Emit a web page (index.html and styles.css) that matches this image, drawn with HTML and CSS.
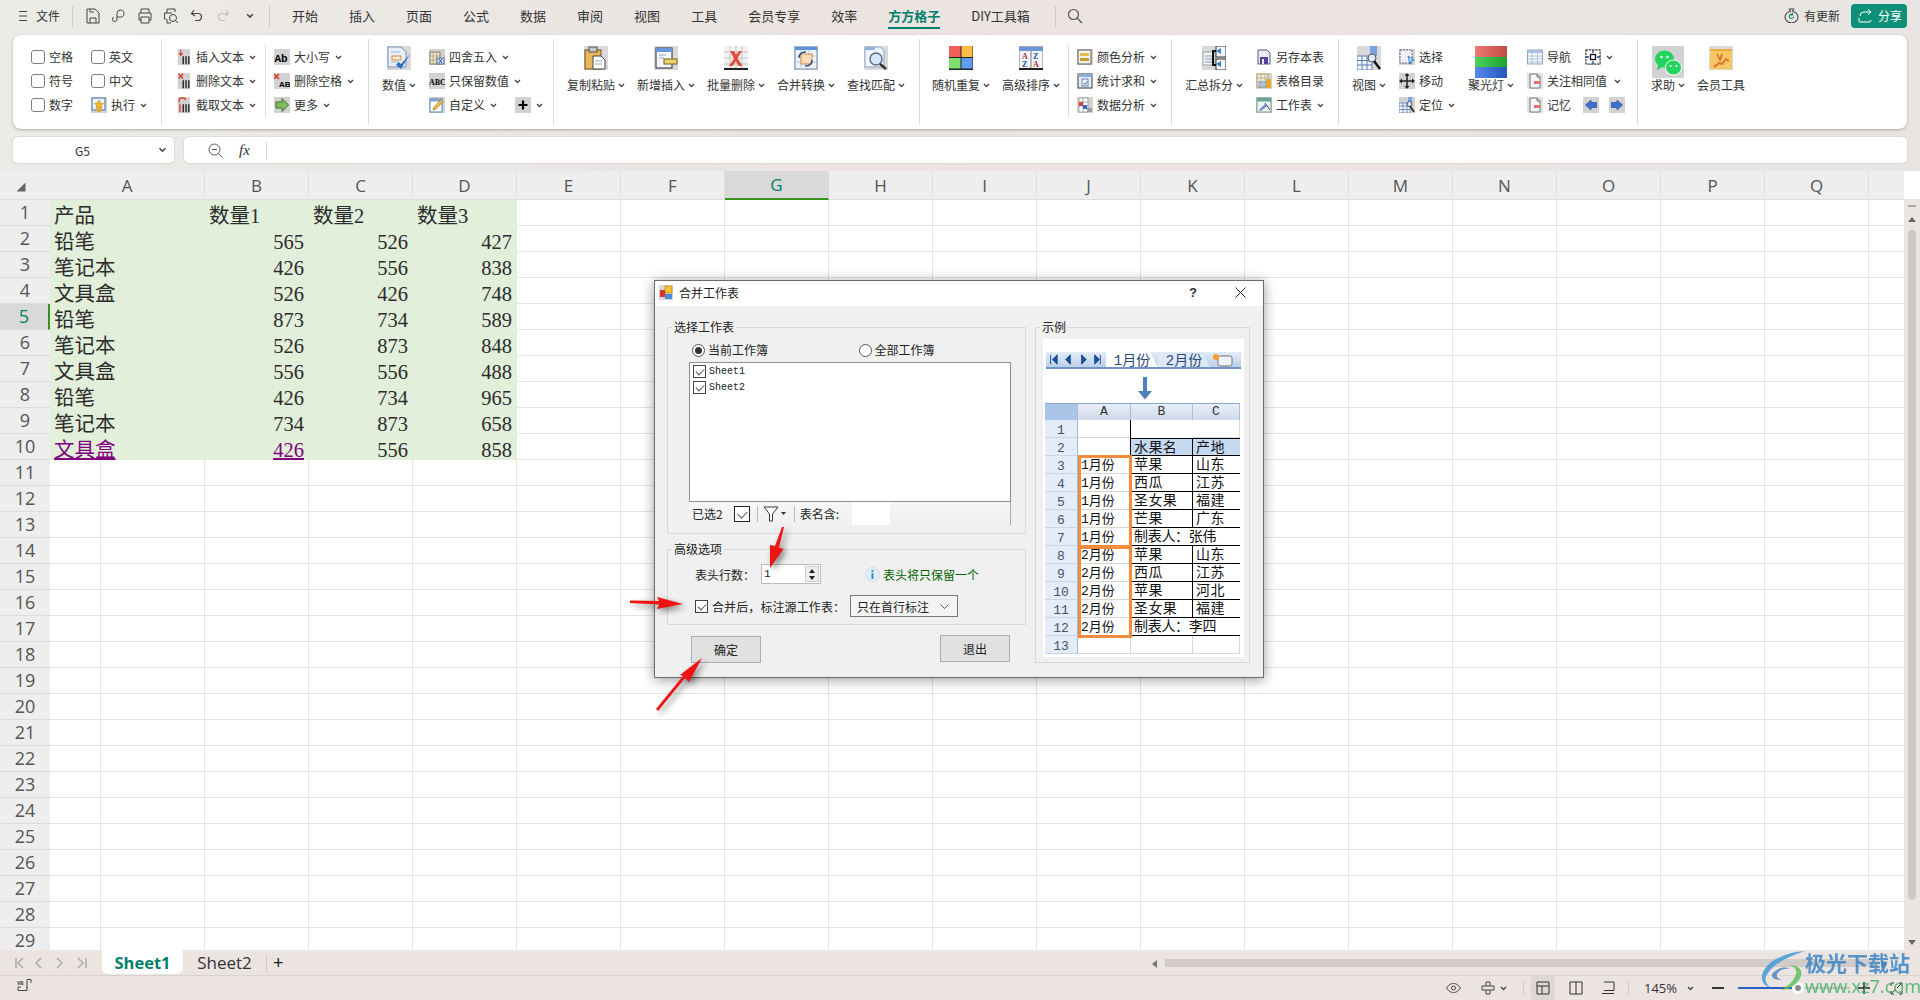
FILE: index.html
```html
<!DOCTYPE html>
<html lang="zh-CN">
<head>
<meta charset="utf-8">
<title>合并工作表</title>
<link rel="stylesheet" href="styles.css">
</head>
<body>
<svg class="defs" aria-hidden="true">
  <defs>
    <symbol id="chev" viewBox="0 0 7 5"><path d="M1 1l2.5 2.5L6 1" fill="none" stroke="#444" stroke-width="1.3"/></symbol>
    <symbol id="bars" viewBox="0 0 16 20"><rect width="16" height="20" fill="#d2d2d2"/><path d="M7 9v10M10.500 9v10M14 9v10" stroke="#111" stroke-width="1.6"/></symbol>
    <symbol id="s-run" viewBox="0 0 16 16"><rect width="16" height="16" fill="#d2d2d2"/><rect x="1" y="1" width="13" height="12" fill="#eef3fb" stroke="#4a6fa5"/><path d="M8 3l1.500 3 3 .4-2.200 2 .6 3L8 10l-2.900 1.400.6-3-2.200-2 3-.4z" fill="#f3b81f" stroke="#a87a10" stroke-width=".5"/><circle cx="8" cy="13" r="2.300" fill="#e6a91e"/></symbol>
    <symbol id="s-more" viewBox="0 0 16 16"><rect width="16" height="16" fill="#d2d2d2"/><path d="M2 5h6V1.500L14.500 8 8 14.500V11H2z" fill="#7fbd5a" stroke="#3d6e2b"/></symbol>
    <symbol id="s-round" viewBox="0 0 16 16"><rect width="16" height="16" fill="#d2d2d2"/><rect x="1" y="3" width="10" height="12" fill="#f5e6b8" stroke="#7b7b7b"/><path d="M4 3v12M7.500 3v12M1 7h10M1 11h10" stroke="#9a9a9a" stroke-width=".7"/><rect x="8" y="9" width="7" height="6" fill="#dfe8f6" stroke="#4a6fa5"/><path d="M10 10l3 4M13 10l-3 4" stroke="#27477d"/></symbol>
    <symbol id="s-custom" viewBox="0 0 16 16"><rect width="16" height="16" fill="#d2d2d2"/><rect x="1" y="2" width="12" height="13" fill="#fff" stroke="#5a7fb0"/><path d="M1 2h12v2.500H1z" fill="#7fa5d8"/><path d="M4 13l1-3 7-7.500 2 2L7 12z" fill="#f1c24b" stroke="#9a6f12" stroke-width=".7"/></symbol>
    <symbol id="s-plus" viewBox="0 0 16 16"><rect width="16" height="16" fill="#d2d2d2"/><path d="M8 3.500v9M3.500 8h9" stroke="#000" stroke-width="2.200"/></symbol>
    <symbol id="s-color" viewBox="0 0 16 16"><rect width="16" height="16" fill="#d2d2d2"/><rect x="1" y="1" width="13" height="14" fill="#f2f2ea" stroke="#5c5c5c"/><rect x="3" y="4" width="9" height="3" fill="#e3c04d"/><rect x="3" y="9" width="9" height="3" fill="#c79b2c"/></symbol>
    <symbol id="s-stat" viewBox="0 0 16 16"><rect x="1" y="1" width="14" height="14" fill="#eaf1fb" stroke="#333"/><rect x="1" y="1" width="14" height="3" fill="#8daedb"/><rect x="5" y="6" width="6" height="7" fill="#fff" stroke="#5b7fb5"/><path d="M6.500 10l1.500 1.500 2-3" fill="none" stroke="#2a5b9c"/></symbol>
    <symbol id="s-data" viewBox="0 0 16 16"><rect width="16" height="16" fill="#d2d2d2"/><path d="M2 1h9v14H2zM2 5h9M2 9h9M6 1v14" fill="#fff" stroke="#8a8a8a" stroke-width=".7"/><rect x="2" y="5" width="4" height="4" fill="#d9433d"/><rect x="6" y="8" width="4" height="4" fill="#3a62c6"/><rect x="10" y="11" width="5" height="4" fill="#9b9b9b"/></symbol>
    <symbol id="s-save" viewBox="0 0 16 16"><path d="M2 1h9l3 3v11H2z" fill="#e8ebf5" stroke="#5c5c7a"/><rect x="4" y="8" width="8" height="7" fill="#5b3f9c"/><rect x="6" y="10" width="2" height="5" fill="#e8ebf5"/></symbol>
    <symbol id="s-index" viewBox="0 0 16 16"><rect width="16" height="16" fill="#d2d2d2"/><rect x="1" y="1" width="11" height="13" fill="#f8e9c2" stroke="#b8893a" stroke-width=".7"/><path d="M1 5h11M1 9h11M5 1v13M9 1v13" stroke="#8da7cc" stroke-width=".7"/><rect x="10" y="6" width="5" height="9" fill="#e9a928"/><rect x="3" y="9" width="7" height="5" fill="#b5c3d8" stroke="#6d85a8" stroke-width=".6"/></symbol>
    <symbol id="s-sheet" viewBox="0 0 16 16"><rect width="16" height="16" fill="#d2d2d2"/><rect x="1" y="1" width="14" height="14" fill="#eef4f2" stroke="#5e8a85" stroke-width=".8"/><rect x="1" y="1" width="14" height="3.500" fill="#6aa39b"/><path d="M3 13l6-6 2 2-6 5z" fill="#6f8fd0"/><path d="M9 6l5 7" stroke="#444"/></symbol>
    <symbol id="s-select" viewBox="0 0 16 16"><rect width="16" height="16" fill="#d2d2d2"/><rect x="1" y="1" width="12" height="13" fill="#eef2f8" stroke="#666" stroke-dasharray="2 1"/><path d="M9 7l6 4-3 .6-1 3.400z" fill="#cfe6ff" stroke="#2f86d8"/></symbol>
    <symbol id="s-move" viewBox="0 0 16 16"><rect width="16" height="16" fill="#d2d2d2"/><path d="M8 1.500v13M1.500 8h13" stroke="#222" stroke-width="1.500"/><path d="M8 0l2.500 3h-5zM8 16l2.500-3h-5zM0 8l3-2.500v5zM16 8l-3-2.500v5z" fill="#222"/></symbol>
    <symbol id="s-loc" viewBox="0 0 16 16"><rect width="16" height="16" fill="#d2d2d2"/><path d="M0 6h11v10H0zM0 9h11M0 12.500h11M4 6v10M8 6v10" fill="#f2f6fc" stroke="#587db4" stroke-width=".8"/><rect x="9" y="0" width="4" height="7" fill="#7aa2e0"/><circle cx="10.500" cy="7" r="2.500" fill="#dfe9f7" stroke="#555"/><path d="M11 9l4 6" stroke="#222" stroke-width="1.500"/></symbol>
    <symbol id="s-nav" viewBox="0 0 16 16"><rect x=".5" y="1" width="15" height="14" fill="#f4f7fb" stroke="#8ea6c6"/><rect x=".5" y="1" width="15" height="3" fill="#a9bfdc"/><path d="M.5 7h15M.5 10h15M.5 13h15M5 4v11M10.500 4v11" stroke="#9fb4d0" stroke-width=".7"/></symbol>
    <symbol id="s-focus" viewBox="0 0 16 16"><rect width="16" height="16" fill="#d2d2d2"/><rect x="1" y="1" width="14" height="14" fill="#fff" stroke="#111" stroke-dasharray="2 1.200"/><rect x="5.500" y="5.500" width="5" height="5" fill="#fff" stroke="#111" stroke-width="1.300"/><path d="M8 1v3M8 12v3M1 8h3M12 8h3" stroke="#1c3f8f" stroke-width="1.300"/></symbol>
    <symbol id="s-mem" viewBox="0 0 16 16"><rect width="16" height="16" fill="#e2e2e2"/><path d="M3 1h7l3 3v11H3z" fill="#f6f6f6" stroke="#777"/><rect x="7" y="8" width="6" height="3" fill="#e4736c"/><path d="M10 1v3h3" fill="none" stroke="#777"/></symbol>
    <symbol id="s-left" viewBox="0 0 16 16"><rect width="16" height="16" fill="#d2d2d2"/><path d="M2.500 8L8 3v2.500h5.500v5H8V13z" fill="#3d6fd0" stroke="#1e3f8a" stroke-width=".6"/></symbol>
    <symbol id="s-right" viewBox="0 0 16 16"><rect width="16" height="16" fill="#d2d2d2"/><path d="M13.500 8L8 3v2.500H2.500v5H8V13z" fill="#3d6fd0" stroke="#1e3f8a" stroke-width=".6"/></symbol>

    <symbol id="l-num" viewBox="0 0 24 24"><rect width="24" height="24" fill="#d9d9d9"/><path d="M1 1h13l5 5v15H1z" fill="#e9f0fb" stroke="#7a8fb0"/><path d="M4 6h9M4 16h8" stroke="#9db4d6"/><rect x="5" y="10" width="9" height="4" fill="#f6f2e2" stroke="#d98a32"/><path d="M9 19l5 4 9-15-9 10-2.500-2z" fill="#2f6fc4"/></symbol>
    <symbol id="l-paste" viewBox="0 0 24 24"><rect width="24" height="24" fill="#d9d9d9"/><rect x="1" y="4" width="16" height="19" fill="#e9b75c" stroke="#6b4e1f"/><rect x="5" y="1" width="8" height="5" fill="#c7c7c7" stroke="#555"/><path d="M9 10h8l4 4v9H9z" fill="#fff" stroke="#444"/><path d="M11 15h7M11 18h7" stroke="#9ab"/></symbol>
    <symbol id="l-ins" viewBox="0 0 24 24"><rect width="24" height="24" fill="#d9d9d9"/><rect x="2" y="2" width="16" height="20" fill="#f4f7fc" stroke="#2a2a2a"/><rect x="2" y="2" width="16" height="4" fill="#6a95d8"/><path d="M5 9h7M5 12h5" stroke="#8da6cc"/><rect x="10" y="13" width="13" height="5" fill="#e9d36a" stroke="#75651c"/></symbol>
    <symbol id="l-del" viewBox="0 0 24 24"><rect width="24" height="24" fill="#f3f3f3"/><path d="M0 6h24M0 12h24M0 18h24M6 0v24M12 0v24M18 0v24" stroke="#c4c4c4"/><rect y="22" width="24" height="2" fill="#222"/><path d="M6 5l4 0 2 4 3-4h3l-4.500 7 5 8h-4l-2.500-5-3.500 5H5l5-7.500z" fill="#e64a3a"/></symbol>
    <symbol id="l-merge" viewBox="0 0 24 24"><rect width="24" height="24" fill="#d9d9d9"/><rect x="1" y="1" width="22" height="22" fill="#eef3fb" stroke="#6e89b4"/><rect x="1" y="1" width="22" height="3" fill="#5f8fd6"/><path d="M1 10h22M1 16h22M7 4v19M15 4v19" stroke="#bccbe3"/><rect x="7" y="8" width="11" height="10" fill="#f8dcc0" stroke="#d98a32"/><path d="M5 12c0-4 3-6 7-6M18 14c0 4-3 6-7 6" fill="none" stroke="#23488a" stroke-width="1.400"/></symbol>
    <symbol id="l-find" viewBox="0 0 24 24"><rect width="24" height="24" fill="#d9d9d9"/><path d="M1 1h15l4 4v16H1z" fill="#f0f4fb" stroke="#8fa5c7"/><rect x="1" y="1" width="10" height="3" fill="#8fb0e0"/><circle cx="12" cy="13" r="6" fill="#d6e6fa" stroke="#5f6f85" stroke-width="1.500"/><path d="M16 18l6 5" stroke="#333" stroke-width="2.500"/></symbol>
    <symbol id="l-rand" viewBox="0 0 24 24"><rect width="24" height="24" fill="#222"/><rect x="0" y="0" width="11.500" height="11" fill="#f25f58"/><rect x="12.500" y="0" width="11" height="11" fill="#ffbe42"/><rect x="0" y="12" width="11.500" height="10.500" fill="#7ee06a"/><rect x="12.500" y="12" width="11" height="10.500" fill="#5f9cf4"/></symbol>
    <symbol id="l-sort" viewBox="0 0 24 24"><rect width="24" height="24" fill="#d9d9d9"/><rect y="1" width="24" height="22" fill="#f1f5fb" stroke="#7a7a7a"/><rect y="1" width="24" height="4" fill="#6a95d8"/><path d="M12 5v18" stroke="#777"/><path d="M0 23h24" stroke="#222" stroke-width="2"/><text x="3" y="13" class="svg-t red">A</text><text x="3" y="21" class="svg-t blue">Z</text><text x="14" y="13" class="svg-t blue">Z</text><text x="14" y="21" class="svg-t red">A</text></symbol>
    <symbol id="l-sum" viewBox="0 0 24 24"><rect width="24" height="24" fill="#d9d9d9"/><rect x="1" y="6" width="12" height="13" fill="#eef1f6" stroke="#9aa"/><path d="M3 10h8M3 13h8M3 16h8" stroke="#99a"/><rect x="14" y="0" width="10" height="11" fill="#f3f6fb" stroke="#333"/><rect x="14" y="13" width="10" height="11" fill="#f3f6fb" stroke="#333"/><path d="M14 5h-3v14h3" fill="none" stroke="#111" stroke-width="2"/><path d="M14 5l5-3v6zM14 18l5-3v6z" fill="#3f7fd0"/></symbol>
    <symbol id="l-view" viewBox="0 0 24 24"><rect width="24" height="24" fill="#d9d9d9"/><path d="M0 10h15v14H0zM0 14.500h15M0 19h15M5 10v14M10 10v14" fill="#f2f6fc" stroke="#587db4"/><rect x="13" y="0" width="7" height="10" fill="#7aa2e0"/><circle cx="15" cy="12" r="4" fill="#dfe9f7" stroke="#555"/><path d="M17 15l6 8" stroke="#111" stroke-width="2.500"/></symbol>
    <symbol id="l-spot" viewBox="0 0 32 32"><rect width="32" height="11" fill="#ef5a55"/><rect y="11" width="32" height="10" fill="#22c63a"/><rect y="21" width="32" height="11" fill="#2b6be8"/><rect width="32" height="32" fill="url(#spot-sheen)"/></symbol>
    <linearGradient id="spot-sheen" x1="0" y1="0" x2="1" y2="0"><stop offset="0" stop-color="#fff" stop-opacity=".2"/><stop offset="1" stop-color="#000" stop-opacity=".18"/></linearGradient>
    <symbol id="l-wx" viewBox="0 0 32 32"><rect width="32" height="32" fill="#d2d2d2"/><ellipse cx="12.500" cy="13" rx="9.500" ry="8.500" fill="#22d45d"/><path d="M6 19l-1 5 6-3z" fill="#22d45d"/><ellipse cx="21.500" cy="21.500" rx="8" ry="7.500" fill="#22d45d" stroke="#fff"/><circle cx="9.500" cy="11" r="1.300" fill="#fff"/><circle cx="15.500" cy="11" r="1.300" fill="#fff"/><circle cx="18.500" cy="20" r="1.100" fill="#fff"/><circle cx="24.500" cy="20" r="1.100" fill="#fff"/></symbol>
    <symbol id="l-vip" viewBox="0 0 24 24"><rect width="24" height="24" fill="#d9d9d9"/><rect x="1" y="3" width="22" height="20" fill="#f7c766"/><rect x="1" y="3" width="22" height="2" fill="#ecab3e"/><path d="M8 8l3 6 2-6" fill="none" stroke="#d8641d" stroke-width="1.500"/><path d="M5 21l5-4 3 1 4-5 3 2" fill="none" stroke="#e0742a" stroke-width="2"/></symbol>
  </defs>
</svg>

<div class="app">
  <header class="topbar">
    <svg class="menu-ic" viewBox="0 0 8 12"><path d="M0 1.500h8M0 6h8M0 10.500h8" stroke="#444" stroke-width="1.200"/></svg>
    <span class="file">文件</span>
    <i class="tsep first"></i>
    <svg class="qi" viewBox="0 0 14 16"><path d="M1 1h8l4 4v10H1zM4 15v-5h6v5M4 1v3h4" fill="none" stroke="#444"/></svg>
    <svg class="qi" viewBox="0 0 14 16"><path d="M5 9h3a3.500 3.500 0 1 0-3-3.500V11a2.300 2.300 0 1 1-3-2" fill="none" stroke="#444"/></svg>
    <svg class="qi" viewBox="0 0 14 16"><path d="M3 5V1h8v4M3 12H1V5h12v7h-2M3 9h8v6H3z" fill="none" stroke="#444"/></svg>
    <svg class="qi" viewBox="0 0 14 16"><path d="M3 5V1h8v3M2 11H.5V5H8M3 11v4h4" fill="none" stroke="#444"/><circle cx="9" cy="10" r="3.500" fill="none" stroke="#444"/><path d="M11.500 12.500l2.500 2.500" stroke="#444"/></svg>
    <svg class="qi" viewBox="0 0 14 16"><path d="M4 2L1.500 5.500 5 8M2 5.500h6a3.500 3.500 0 0 1 0 7H5" fill="none" stroke="#444" stroke-width="1.200"/></svg>
    <svg class="qi" viewBox="0 0 14 16"><path d="M10 2l2.500 3.500L9 8M12 5.500H6a3.500 3.500 0 0 0 0 7h3" fill="none" stroke="#bdbdbd" stroke-width="1.200"/></svg>
    <svg class="qchev"><use href="#chev"/></svg>
    <i class="tsep second"></i>
    <nav class="tabs">
      <span class="tab">开始</span><span class="tab">插入</span><span class="tab">页面</span><span class="tab">公式</span><span class="tab">数据</span><span class="tab">审阅</span><span class="tab">视图</span><span class="tab">工具</span><span class="tab">会员专享</span><span class="tab">效率</span><span class="tab active">方方格子</span><span class="tab">DIY工具箱</span>
    </nav>
    <i class="tsep third"></i>
    <svg class="search" viewBox="0 0 16 16"><circle cx="6.500" cy="6.500" r="5" fill="none" stroke="#555" stroke-width="1.200"/><path d="M10 10l5 5" stroke="#555" stroke-width="1.200"/></svg>
    <div class="top-right">
      <svg class="upd" viewBox="0 0 14 14"><path d="M5 1h4l-1 2a6 5.500 0 1 1-2 0z" fill="none" stroke="#444"/><path d="M9 8a2 2 0 1 1-1-2M8 4.500V6.500H6" fill="none" stroke="#0e8c74"/></svg>
      <span class="upd-t">有更新</span>
      <span class="share"><svg viewBox="0 0 14 14"><path d="M13 3H6a4 4 0 0 0-4 4v0M1 9v3a1 1 0 0 0 1 1h9a2 2 0 0 0 2-2" fill="none" stroke="#fff"/><path d="M10 .5L13 3l-3 2.500" fill="none" stroke="#fff"/></svg>分享</span>
    </div>
  </header>

  <section class="ribbon">
    <div class="grp g-a">
      <div class="scol w60">
        <label class="sm"><b class="cb"></b>空格</label>
        <label class="sm"><b class="cb"></b>符号</label>
        <label class="sm"><b class="cb"></b>数字</label>
      </div>
      <div class="scol">
        <label class="sm"><b class="cb"></b>英文</label>
        <label class="sm"><b class="cb"></b>中文</label>
        <span class="sm"><svg class="si"><use href="#s-run"/></svg>执行<svg class="chev"><use href="#chev"/></svg></span>
      </div>
    </div>
    <i class="sep"></i>
    <div class="grp g-b">
      <div class="scol">
        <span class="sm"><svg class="si" viewBox="0 0 16 20"><use href="#bars"/><path d="M4 1v7M1.500 5L4 8l2.500-3" fill="none" stroke="#e52b1f" stroke-width="1.300"/></svg>插入文本<svg class="chev"><use href="#chev"/></svg></span>
        <span class="sm"><svg class="si" viewBox="0 0 16 20"><use href="#bars"/><path d="M1 1l6 6M7 1L1 7" stroke="#e52b1f" stroke-width="1.600"/></svg>删除文本<svg class="chev"><use href="#chev"/></svg></span>
        <span class="sm"><svg class="si" viewBox="0 0 16 20"><use href="#bars"/><path d="M2 7V4a4 3 0 0 1 8 0" fill="none" stroke="#e52b1f" stroke-width="1.500"/><path d="M3 9v10" stroke="#e52b1f" stroke-width="1.600"/></svg>截取文本<svg class="chev"><use href="#chev"/></svg></span>
      </div>
    </div>
    <i class="sep short"></i>
    <div class="grp g-c">
      <div class="scol">
        <span class="sm"><svg class="si gray" viewBox="0 0 16 16"><text x=".5" y="12.500" class="svg-ab">Ab</text></svg>大小写<svg class="chev"><use href="#chev"/></svg></span>
        <span class="sm"><svg class="si gray" viewBox="0 0 16 16"><path d="M0 1l5 5M5 1L0 6" stroke="#e52b1f" stroke-width="1.500"/><text x="5" y="14" class="svg-abs">AB</text></svg>删除空格<svg class="chev"><use href="#chev"/></svg></span>
        <span class="sm"><svg class="si"><use href="#s-more"/></svg>更多<svg class="chev"><use href="#chev"/></svg></span>
      </div>
    </div>
    <i class="sep"></i>
    <div class="grp g-d">
      <div class="lg"><svg class="li"><use href="#l-num"/></svg><span class="ll">数值<svg class="chev"><use href="#chev"/></svg></span></div>
      <div class="scol">
        <span class="sm"><svg class="si"><use href="#s-round"/></svg>四舍五入<svg class="chev"><use href="#chev"/></svg></span>
        <span class="sm"><svg class="si gray" viewBox="0 0 16 16"><text x="0" y="12" class="svg-abc">ABC</text></svg>只保留数值<svg class="chev"><use href="#chev"/></svg></span>
        <span class="sm"><svg class="si"><use href="#s-custom"/></svg>自定义<svg class="chev"><use href="#chev"/></svg><svg class="si plus"><use href="#s-plus"/></svg><svg class="chev"><use href="#chev"/></svg></span>
      </div>
    </div>
    <i class="sep"></i>
    <div class="grp g-e">
      <div class="lg"><svg class="li"><use href="#l-paste"/></svg><span class="ll">复制粘贴<svg class="chev"><use href="#chev"/></svg></span></div>
      <div class="lg"><svg class="li"><use href="#l-ins"/></svg><span class="ll">新增插入<svg class="chev"><use href="#chev"/></svg></span></div>
      <div class="lg"><svg class="li"><use href="#l-del"/></svg><span class="ll">批量删除<svg class="chev"><use href="#chev"/></svg></span></div>
      <div class="lg"><svg class="li"><use href="#l-merge"/></svg><span class="ll">合并转换<svg class="chev"><use href="#chev"/></svg></span></div>
      <div class="lg"><svg class="li"><use href="#l-find"/></svg><span class="ll">查找匹配<svg class="chev"><use href="#chev"/></svg></span></div>
    </div>
    <i class="sep"></i>
    <div class="grp g-f">
      <div class="lg"><svg class="li"><use href="#l-rand"/></svg><span class="ll">随机重复<svg class="chev"><use href="#chev"/></svg></span></div>
      <div class="lg"><svg class="li"><use href="#l-sort"/></svg><span class="ll">高级排序<svg class="chev"><use href="#chev"/></svg></span></div>
    </div>
    <i class="sep short"></i>
    <div class="grp g-g">
      <div class="scol">
        <span class="sm"><svg class="si"><use href="#s-color"/></svg>颜色分析<svg class="chev"><use href="#chev"/></svg></span>
        <span class="sm"><svg class="si"><use href="#s-stat"/></svg>统计求和<svg class="chev"><use href="#chev"/></svg></span>
        <span class="sm"><svg class="si"><use href="#s-data"/></svg>数据分析<svg class="chev"><use href="#chev"/></svg></span>
      </div>
    </div>
    <i class="sep"></i>
    <div class="grp g-h">
      <div class="lg"><svg class="li"><use href="#l-sum"/></svg><span class="ll">汇总拆分<svg class="chev"><use href="#chev"/></svg></span></div>
      <div class="scol">
        <span class="sm"><svg class="si"><use href="#s-save"/></svg>另存本表</span>
        <span class="sm"><svg class="si"><use href="#s-index"/></svg>表格目录</span>
        <span class="sm"><svg class="si"><use href="#s-sheet"/></svg>工作表<svg class="chev"><use href="#chev"/></svg></span>
      </div>
    </div>
    <i class="sep"></i>
    <div class="grp g-i">
      <div class="lg"><svg class="li"><use href="#l-view"/></svg><span class="ll">视图<svg class="chev"><use href="#chev"/></svg></span></div>
      <div class="scol w69">
        <span class="sm"><svg class="si"><use href="#s-select"/></svg>选择</span>
        <span class="sm"><svg class="si"><use href="#s-move"/></svg>移动</span>
        <span class="sm"><svg class="si"><use href="#s-loc"/></svg>定位<svg class="chev"><use href="#chev"/></svg></span>
      </div>
      <div class="lg spot"><svg class="li tall wide"><use href="#l-spot"/></svg><span class="ll over">聚光灯<svg class="chev"><use href="#chev"/></svg></span></div>
      <div class="scol">
        <span class="sm"><svg class="si"><use href="#s-nav"/></svg>导航<svg class="si nav2"><use href="#s-focus"/></svg><svg class="chev"><use href="#chev"/></svg></span>
        <span class="sm"><svg class="si"><use href="#s-mem"/></svg>关注相同值<svg class="chev wide-gap"><use href="#chev"/></svg></span>
        <span class="sm"><svg class="si"><use href="#s-mem"/></svg>记忆<svg class="si mem2"><use href="#s-left"/></svg><svg class="si mem3"><use href="#s-right"/></svg></span>
      </div>
    </div>
    <i class="sep"></i>
    <div class="grp g-j">
      <div class="lg"><svg class="li tall"><use href="#l-wx"/></svg><span class="ll over">求助<svg class="chev"><use href="#chev"/></svg></span></div>
      <div class="lg"><svg class="li"><use href="#l-vip"/></svg><span class="ll">会员工具</span></div>
    </div>
  </section>

  <section class="formula">
    <div class="namebox"><span>G5</span><svg class="nchev"><use href="#chev"/></svg></div>
    <div class="fxbox">
      <svg class="fz" viewBox="0 0 15 15"><circle cx="6.500" cy="6.500" r="5.500" fill="none" stroke="#555"/><path d="M4 6.500h5M10.500 10.500l4 4" stroke="#555"/></svg>
      <span class="fx">fx</span>
      <i class="fxsep"></i>
    </div>
  </section>

  <main class="sheet-wrap">
    <div class="sheet">
      <div class="corner"><i></i></div>
      <div class="ch">A</div><div class="ch">B</div><div class="ch">C</div><div class="ch">D</div><div class="ch">E</div><div class="ch">F</div><div class="ch sel">G</div><div class="ch">H</div><div class="ch">I</div><div class="ch">J</div><div class="ch">K</div><div class="ch">L</div><div class="ch">M</div><div class="ch">N</div><div class="ch">O</div><div class="ch">P</div><div class="ch">Q</div><div class="ch rest"></div>

      <div class="rh">1</div><div class="c">产品</div><div class="c">数量1</div><div class="c">数量2</div><div class="c">数量3</div>
      <div class="rh">2</div><div class="c">铅笔</div><div class="c n">565</div><div class="c n">526</div><div class="c n">427</div>
      <div class="rh">3</div><div class="c">笔记本</div><div class="c n">426</div><div class="c n">556</div><div class="c n">838</div>
      <div class="rh">4</div><div class="c">文具盒</div><div class="c n">526</div><div class="c n">426</div><div class="c n">748</div>
      <div class="rh sel">5</div><div class="c">铅笔</div><div class="c n">873</div><div class="c n">734</div><div class="c n">589</div>
      <div class="rh">6</div><div class="c">笔记本</div><div class="c n">526</div><div class="c n">873</div><div class="c n">848</div>
      <div class="rh">7</div><div class="c">文具盒</div><div class="c n">556</div><div class="c n">556</div><div class="c n">488</div>
      <div class="rh">8</div><div class="c">铅笔</div><div class="c n">426</div><div class="c n">734</div><div class="c n">965</div>
      <div class="rh">9</div><div class="c">笔记本</div><div class="c n">734</div><div class="c n">873</div><div class="c n">658</div>
      <div class="rh">10</div><div class="c"><u>文具盒</u></div><div class="c n"><u>426</u></div><div class="c n">556</div><div class="c n">858</div>
      <div class="rh">11</div><div class="rh">12</div><div class="rh">13</div><div class="rh">14</div><div class="rh">15</div><div class="rh">16</div><div class="rh">17</div><div class="rh">18</div><div class="rh">19</div><div class="rh">20</div><div class="rh">21</div><div class="rh">22</div><div class="rh">23</div><div class="rh">24</div><div class="rh">25</div><div class="rh">26</div><div class="rh">27</div><div class="rh">28</div><div class="rh">29</div>
    </div>
    <aside class="vbar">
      <i class="vdash"></i>
      <i class="vup"></i>
      <i class="vthumb"></i>
      <i class="vdown"></i>
    </aside>
  </main>

  <footer class="tabbar">
    <svg class="tnav" viewBox="0 0 80 12"><path d="M4 1v10M11 1L6 6l5 5M29 1l-5 5 5 5M45 1l5 5-5 5M66 1l5 5-5 5M74 1v10" fill="none" stroke="#aaa" stroke-width="1.500"/></svg>
    <span class="stab active">Sheet1</span>
    <span class="stab">Sheet2</span>
    <i class="tabsep"></i>
    <span class="addtab">+</span>
    <i class="harrow-l"></i>
    <i class="hthumb"></i>
    <i class="harrow-r"></i>
  </footer>
  <footer class="status">
    <svg class="vb" viewBox="0 0 15 12"><path d="M4 8H1v3.500h9V8M10 9V.5h4V4" fill="none" stroke="#444"/><text x="0" y="6" class="svg-vb">VB</text></svg>
    <div class="st-right">
      <svg class="s-eye" viewBox="0 0 15 10"><path d="M.5 5C3 1.500 5 .5 7.500 .5S12 1.500 14.500 5C12 8.500 10 9.500 7.500 9.500S3 8.500 .5 5z" fill="none" stroke="#444"/><circle cx="7.500" cy="5" r="2" fill="none" stroke="#444"/></svg>
      <svg class="s-cross" viewBox="0 0 14 14"><path d="M5 1h4v4H5zM5 9h4v4H5zM5 5H1v4h4M9 5h4v4H9" fill="none" stroke="#444"/></svg>
      <svg class="chev s-chev"><use href="#chev"/></svg>
      <i class="s-sep"></i>
      <span class="s-btn"><svg viewBox="0 0 14 14"><path d="M1 1h12v12H1zM1 5h12M6 5v8" fill="none" stroke="#333"/></svg></span>
      <svg class="s-i2" viewBox="0 0 14 14"><path d="M1 1h12v12H1zM7 1v12" fill="none" stroke="#333"/></svg>
      <svg class="s-i3" viewBox="0 0 14 14"><path d="M3 1h10v8.500H3M1 12.500h12" fill="none" stroke="#333"/></svg>
      <i class="s-sep s2"></i>
      <span class="pct">145%</span>
      <svg class="chev p-chev"><use href="#chev"/></svg>
      <i class="minus"></i>
      <div class="slider"><i class="fill"></i><i class="knob"></i></div>
      <svg class="s-plus" viewBox="0 0 12 12"><path d="M6 0v12M0 6h12" stroke="#222" stroke-width="1.500"/></svg>
      <svg class="s-full" viewBox="0 0 13 13"><path d="M1 4V1h3M9 1h3v3M12 9v3H9M4 12H1V9M2 11l4-4M7 6l4-4" fill="none" stroke="#333"/></svg>
    </div>
  </footer>
</div>

<section class="dialog">
  <div class="dtitle">
    <svg class="dicon" viewBox="0 0 14 15"><rect width="14" height="15" fill="#d8d8d8"/><rect x="6" y="1" width="7" height="7" fill="#f6c32e" stroke="#a07a10" stroke-width=".6"/><rect x="1" y="5" width="5" height="7" fill="#d8352c"/><rect x="6" y="9" width="7" height="5" fill="#4f8ad8"/></svg>
    <span class="dt-text">合并工作表</span>
    <span class="dq">?</span>
    <svg class="dx" viewBox="0 0 11 11"><path d="M.5 .5l10 10M10.500 .5l-10 10" stroke="#222" stroke-width="1"/></svg>
  </div>
  <div class="dbody">
    <div class="dleft">
      <fieldset class="fs fs-sel">
        <legend>选择工作表</legend>
        <div class="radios">
          <span class="radio on"><i></i>当前工作簿</span>
          <span class="radio"><i></i>全部工作簿</span>
        </div>
        <div class="listbox">
          <div class="li-row"><b class="ck"></b>Sheet1</div>
          <div class="li-row"><b class="ck"></b>Sheet2</div>
        </div>
        <div class="listbar">
          <span class="lb-count">已选2</span>
          <b class="ck big"></b>
          <i class="lb-sep"></i>
          <svg class="funnel" viewBox="0 0 24 16"><path d="M1 1h14L9.500 8v7H6.500V8z" fill="#fff" stroke="#333"/><path d="M18 6h5l-2.500 3z" fill="#333"/></svg>
          <i class="lb-sep"></i>
          <span class="lb-name">表名含:</span>
          <i class="lb-input"></i>
        </div>
      </fieldset>
      <fieldset class="fs fs-adv">
        <legend>高级选项</legend>
        <div class="adv-1">
          <span>表头行数：</span>
          <div class="spin"><span>1</span><div class="spinbtn"><i class="up"></i><i class="down"></i></div></div>
          <svg class="info" viewBox="0 0 15 15"><circle cx="7.500" cy="7.500" r="7" fill="#e4edf7" stroke="#cfdbe8"/><rect x="6.500" y="6" width="2" height="6" fill="#2d8fd5"/><rect x="6.500" y="3" width="2" height="2" fill="#2d8fd5"/></svg>
          <span class="hint">表头将只保留一个</span>
        </div>
        <div class="adv-2">
          <b class="ck"></b>
          <span class="adv-l">合并后，标注源工作表：</span>
          <div class="select"><span>只在首行标注</span><svg class="sel-chev" viewBox="0 0 9 5"><path d="M.5 .5L4.500 4.500 8.500 .5" fill="none" stroke="#555"/></svg></div>
        </div>
      </fieldset>
      <div class="dbtns">
        <span class="btn">确定</span>
        <span class="btn up1">退出</span>
      </div>
    </div>
    <fieldset class="fs fs-ex">
      <legend>示例</legend>
      <div class="exbox">
        <div class="xltabs">
          <span class="xlnav"><svg viewBox="0 0 58 16"><path d="M3 3v10M10 3L5 8l5 5zM24 3l-5 5 5 5zM36 3l5 5-5 5zM50 3l5 5-5 5zM56 3v10" fill="#1d4f9a" stroke="#1d4f9a"/></svg></span>
          <span class="xltab on">1月份</span>
          <span class="xltab">2月份</span>
          <svg class="xlnew" viewBox="0 0 24 14"><rect x="7" y="3" width="14" height="10" rx="2" fill="#eef3f8" stroke="#777"/><circle cx="5" cy="4" r="3" fill="#f2a12e"/></svg>
        </div>
        <svg class="exarrow" viewBox="0 0 16 24"><path d="M6 1h4v14h5l-7 8.500L1 15h5z" fill="#4f81bd"/></svg>
        <div class="xl">
          <div class="xh xc0"></div><div class="xh">A</div><div class="xh">B</div><div class="xh">C</div>
          <div class="xr">1</div><div class="xa"></div><div class="xb nob"></div><div class="xa"></div>
          <div class="xr">2</div><div class="xa"></div><div class="xb head">水果名</div><div class="xb head last">产地</div>
          <div class="xr">3</div><div class="xa">1月份</div><div class="xb">苹果</div><div class="xb last">山东</div>
          <div class="xr">4</div><div class="xa">1月份</div><div class="xb">西瓜</div><div class="xb last">江苏</div>
          <div class="xr">5</div><div class="xa">1月份</div><div class="xb">圣女果</div><div class="xb last">福建</div>
          <div class="xr">6</div><div class="xa">1月份</div><div class="xb">芒果</div><div class="xb last">广东</div>
          <div class="xr">7</div><div class="xa">1月份</div><div class="xb span2">制表人：张伟</div>
          <div class="xr">8</div><div class="xa">2月份</div><div class="xb">苹果</div><div class="xb last">山东</div>
          <div class="xr">9</div><div class="xa">2月份</div><div class="xb">西瓜</div><div class="xb last">江苏</div>
          <div class="xr">10</div><div class="xa">2月份</div><div class="xb">苹果</div><div class="xb last">河北</div>
          <div class="xr">11</div><div class="xa">2月份</div><div class="xb">圣女果</div><div class="xb last">福建</div>
          <div class="xr">12</div><div class="xa">2月份</div><div class="xb span2">制表人：李四</div>
          <div class="xr">13</div><div class="xa"></div><div class="xa"></div><div class="xa"></div>
          <i class="box b1"></i><i class="box b2"></i>
        </div>
      </div>
    </fieldset>
  </div>
</section>

<svg class="annot" viewBox="0 0 1920 1000" aria-hidden="true">
  <polygon points="770,568 783.500,549 779,547.500 784,527 782,527 775,546 770,545" fill="#f01313"/>
  <polygon points="683,604 657,609 659,604.500 630,603 630,600.500 659,601 657,597" fill="#f01313"/>
  <polygon points="702,658 689,682 685,678 658,711 656,709 683,676 680,675" fill="#f01313"/>
</svg>

<div class="watermark">
  <svg class="wm-logo" viewBox="0 0 46 42"><path d="M45 1C30 2 10 8 3 22c-3 7 0 14 8 16-6-4-7-10-3-15C14 13 30 6 45 1z" fill="#3f9bd8" opacity=".85"/><path d="M12 24c4-6 14-8 17-5-5-1-10 1-12 5-1 3 1 5 5 5-5 2-11 0-10-5z" fill="#4a86c5" opacity=".85"/><path d="M21 40c14-1 22-12 20-19-1-4-6-6-11-5 5 1 7 4 6 8-2 7-8 12-15 16z" fill="#5fbf5a" opacity=".85"/></svg>
  <div class="wm-text">
    <span class="wm-cn">极光下载站</span>
    <span class="wm-en">www.xz7.com</span>
  </div>
</div>
</body>
</html>
```

FILE: styles.css
```css
* { box-sizing: border-box; }
html, body { margin: 0; padding: 0; height: 1000px; overflow: hidden; }
body {
  font-family: "Noto Sans CJK SC", "Liberation Sans", sans-serif;
  font-size: 12px;
  color: #333;
  position: relative;
}
i, b { display: block; font-style: normal; font-weight: normal; }
.defs { position: absolute; width: 0; height: 0; }
.app {
  height: 1000px;
  display: flex;
  flex-direction: column;
  background: linear-gradient(90deg, #ecebe7 0%, #ebe4e1 45%, #ece5e2 70%, #e8e5e2 100%);
}

/* top bar */
.topbar { height: 35px; display: flex; align-items: flex-start; padding-left: 19px; flex: none; }
.menu-ic { width: 8px; height: 12px; margin-top: 10px; }
.file { margin: 7px 0 0 9px; line-height: 18px; }
.tsep { width: 1px; height: 21px; background: #cfcac6; margin-top: 6px; }
.tsep.first { margin-left: 12px; margin-right: 1px; }
.tsep.second { margin-left: 15px; }
.tsep.third { margin-left: 25px; }
.qi { width: 14px; height: 16px; margin: 8px 0 0 12px; }
.qchev { width: 8px; height: 6px; margin: 13px 0 0 16px; }
.tabs { display: flex; gap: 31px; margin-left: 22px; }
.tab { padding: 7px 0 3px; line-height: 17px; font-size: 13px; height: 29px; border-bottom: 2px solid transparent; white-space: nowrap; }
.tab.active { color: #00806a; font-weight: bold; border-bottom-color: #00806a; }
.search { width: 16px; height: 16px; margin: 8px 0 0 11px; }
.top-right { margin-left: auto; display: flex; align-items: center; height: 27px; margin-top: 2px; padding-right: 13px; }
.upd { width: 15px; height: 15px; }
.upd-t { margin-left: 5px; }
.share { margin-left: 11px; width: 56px; height: 24px; background: #0e9078; color: #fff; border-radius: 4px; display: flex; align-items: center; padding-left: 7px; gap: 6px; }
.share svg { width: 14px; height: 14px; }

/* ribbon */
.ribbon {
  flex: none;
  height: 94px;
  margin: 0 13px;
  background: #fff;
  border-radius: 8px;
  box-shadow: 0 1px 3px rgba(0,0,0,.28);
  display: flex;
}
.grp { display: flex; flex: none; }
.sep { width: 1px; height: 86px; margin-top: 4px; background: #dcdcdc; flex: none; }
.sep.short { height: 72px; margin-top: 10px; }
.g-a { width: 148px; padding-left: 18px; }
.g-b { width: 103px; padding-left: 14px; }
.g-c { width: 102px; padding-left: 8px; }
.g-d { width: 184px; padding-left: 13px; gap: 13px; }
.g-e { width: 365px; padding-left: 13px; gap: 12px; }
.g-f { width: 148px; padding-left: 12px; gap: 12px; }
.g-g { width: 102px; padding-left: 8px; }
.g-h { width: 166px; padding-left: 13px; gap: 13px; }
.g-i { width: 298px; padding-left: 13px; gap: 13px; }
.g-j { padding-left: 13px; gap: 12px; }
.scol { display: flex; flex-direction: column; padding-top: 10px; }
.scol.w60 { width: 60px; }
.scol.w69 { width: 56px; }
.sm { display: flex; align-items: center; height: 24px; white-space: nowrap; line-height: 16px; }
.si { width: 16px; height: 16px; margin-right: 4px; flex: none; }
.si.gray { background: #d2d2d2; }
.si.plus { margin: 0 0 0 18px; }
.si.nav2 { margin: 0 0 0 14px; }
.si.mem2 { margin: 0 0 0 12px; }
.si.mem3 { margin: 0 0 0 10px; }
.cb { width: 14px; height: 14px; border: 1px solid #7d7d7d; border-radius: 3px; margin-right: 4px; background: #fff; flex: none; }
.chev { width: 7px; height: 5px; margin-left: 5px; flex: none; }
.chev.wide-gap { margin-left: 7px; }
.lg { display: flex; flex-direction: column; align-items: center; padding-top: 11px; width: fit-content; }
.li { width: 24px; height: 24px; flex: none; }
.li.tall { height: 32px; width: 32px; }
.li.wide { width: 32px; }
.ll { margin-top: 7px; display: flex; align-items: center; white-space: nowrap; line-height: 16px; }
.ll.over { margin-top: -1px; position: relative; }
.ll .chev { margin-left: 3px; }
.svg-t { font: bold 8px "Liberation Serif", serif; }
.svg-t.red { fill: #b02a2a; }
.svg-t.blue { fill: #2a4fa0; }
.svg-ab { font: bold 11px "Liberation Mono", monospace; fill: #000; }
.svg-abs { font: bold 8px "Liberation Sans", sans-serif; fill: #000; }
.svg-abc { font: bold 8px "Liberation Serif", serif; fill: #000; }
.svg-vb { font: bold 5.500px "Liberation Mono", monospace; fill: #444; }

/* formula bar */
.formula { flex: none; height: 26px; margin: 8px 13px 0; display: flex; gap: 10px; }
.namebox { width: 161px; background: #fff; border-radius: 5px; box-shadow: 0 0 0 1px #ddd, 0 1px 1px rgba(0,0,0,.12); display: flex; align-items: center; position: relative; }
.namebox span { margin-left: 62px; }
.nchev { width: 9px; height: 6px; margin-left: auto; margin-right: 7px; }
.fxbox { flex: 1; background: #fff; border-radius: 5px; box-shadow: 0 0 0 1px #ddd, 0 1px 1px rgba(0,0,0,.12); display: flex; align-items: center; padding-left: 24px; }
.fz { width: 15px; height: 15px; }
.fx { font: italic 15px "Liberation Serif", serif; margin-left: 16px; width: 27px; }
.fxsep { width: 1px; height: 17px; background: #d8d8d8; }

/* sheet */
.sheet-wrap { flex: 1; min-height: 0; margin-top: 8px; display: flex; background: #fff; overflow: hidden; position: relative; }
.sheet {
  flex: 1;
  display: grid;
  grid-template-columns: 50px 155px repeat(16, 104px) 1fr;
  grid-template-rows: 29px repeat(29, 26px);
  background-color: #fff;
  background-image:
    linear-gradient(90deg, transparent 103px, #e3e3e3 103px),
    linear-gradient(180deg, transparent 25px, #e3e3e3 25px);
  background-size: 104px 100%, 100% 26px;
  background-position: 101px 0, 0 29px;
  font-family: "Open Sans", "Noto Sans", sans-serif;
}
.corner { background: #eee; display: flex; align-items: center; justify-content: center; border-bottom: 1px solid #dcdcdc; }
.corner i { width: 9px; height: 9px; background: #666; clip-path: polygon(100% 0, 100% 100%, 0 100%); margin: 4px 8px 0 0; }
.ch { background: #eee; color: #555; font-size: 17px; display: flex; align-items: center; justify-content: center; border-right: 1px solid #dfdfdf; border-bottom: 1px solid #dcdcdc; }
.ch.sel { background: #d9d9d9; color: #00806a; border-bottom: 2px solid #3a9020; border-right-color: #d9d9d9; }
.ch.rest { border-right: none; }
.rh { grid-column: 1; background: #eee; color: #555; font-size: 18px; display: flex; align-items: center; justify-content: center; border-bottom: 1px solid #dcdcdc; padding-bottom: 2px; }
.rh.sel { background: #d9d9d9; color: #00806a; border-right: 2px solid #3a9020; }
.c {
  background: #e2efda;
  font: 20.500px/26px "Liberation Serif", "Noto Sans CJK SC", serif;
  color: #2c2c2c;
  padding: 3px 5px 0 4px;
  white-space: nowrap;
  overflow: hidden;
}
.c.n { text-align: right; }
.c u { color: #800080; text-decoration-thickness: 2px; text-underline-offset: 1px; }

.vbar { width: 16px; flex: none; background: #ebe5e2; position: relative; display: flex; flex-direction: column; align-items: center; margin-top: 28px; }
.vdash { width: 8px; height: 2px; background: #aaa; margin-top: 6px; }
.vup { width: 0; height: 0; margin-top: 10px; border-style: solid; border-width: 0 4px 5px; border-color: transparent transparent #666; }
.vthumb { width: 8px; height: 670px; background: #cfcac7; border-radius: 4px; margin-top: 8px; }
.vdown { width: 0; height: 0; margin-top: auto; margin-bottom: 5px; border-style: solid; border-width: 5px 4px 0; border-color: #666 transparent transparent; }

/* sheet tabs */
.tabbar { flex: none; height: 26px; display: flex; align-items: flex-start; border-bottom: 1px solid #d9d3d0; background: #ece4e1; }
.tnav { width: 80px; height: 12px; margin: 7px 0 0 12px; }
.stab { height: 24px; width: 81px; margin-left: 10px; font: 17px/26px "Open Sans", "Noto Sans", sans-serif; color: #333; text-align: center; flex: none; }
.stab.active { background: #fff; color: #00806a; font-weight: bold; font-size: 16.500px; border-radius: 0 0 6px 6px; }
.stab + .stab { margin-left: 0; width: 83px; }
.tabsep { width: 1px; height: 18px; background: #cfc9c6; margin-top: 4px; }
.addtab { margin-left: 6px; font: 18px/26px "Liberation Sans", sans-serif; color: #222; }
.harrow-l { width: 0; height: 0; margin: 10px 0 0 868px; border-style: solid; border-width: 4px 5px 4px 0; border-color: transparent #777 transparent transparent; }
.hthumb { width: 715px; height: 8px; margin: 9px 0 0 8px; background: #d0cbc8; border-radius: 0 4px 4px 0; }
.harrow-r { width: 0; height: 0; margin: 10px 0 0 2px; border-style: solid; border-width: 4px 0 4px 5px; border-color: transparent transparent transparent #777; }

.status { flex: none; height: 24px; display: flex; align-items: center; background: #ece4e1; padding: 0 17px; }
.vb { width: 15px; height: 12px; margin-top: -6px; }
.st-right { margin-left: auto; display: flex; align-items: center; height: 24px; }
.s-eye { width: 15px; height: 10px; }
.s-cross { width: 14px; height: 14px; margin-left: 20px; }
.s-chev { margin-left: 5px; }
.s-sep { width: 1px; height: 14px; background: #cfc9c6; margin-left: 16px; }
.s-sep.s2 { margin-left: 13px; }
.s-btn { width: 24px; height: 24px; margin-left: 7px; background: #dcd7d4; border-radius: 4px; display: flex; align-items: center; justify-content: center; }
.s-btn svg { width: 14px; height: 14px; }
.s-i2 { width: 14px; height: 14px; margin-left: 14px; }
.s-i3 { width: 14px; height: 14px; margin-left: 18px; }
.pct { width: 32px; margin-left: 15px; font: 13px "Open Sans", "Noto Sans", sans-serif; }
.p-chev { margin-left: 11px; }
.minus { width: 12px; height: 2px; background: #333; margin-left: 18px; }
.slider { width: 112px; height: 2px; background: #c8c2be; margin-left: 14px; position: relative; }
.fill { width: 55px; height: 2px; background: #2a5fc4; }
.knob { position: absolute; left: 54px; top: -5px; width: 12px; height: 12px; border-radius: 50%; background: #888; border: 3px solid #fff; }
.s-plus { width: 12px; height: 12px; margin-left: 8px; }
.s-full { width: 13px; height: 13px; margin-left: 20px; }

/* dialog */
.dialog {
  position: absolute;
  left: 654px;
  top: 280px;
  width: 610px;
  height: 398px;
  background: #f0f0f0;
  border: 1px solid #6b6b6b;
  box-shadow: 0 2px 12px rgba(0,0,0,.4);
  color: #222;
  font-size: 12px;
}
.dtitle { height: 25px; background: #fff; display: flex; align-items: center; padding: 0 0 2px 4px; }
.dicon { width: 14px; height: 15px; }
.dt-text { margin-left: 6px; }
.dq { margin-left: auto; font: bold 13px "Liberation Sans", sans-serif; color: #333; }
.dx { width: 11px; height: 11px; margin: 0 17px 0 38px; }
.dbody { display: flex; gap: 9px; padding: 13px 0 0 12px; align-items: flex-start; }
.dleft { width: 359px; flex: none; }
.fs { margin: 0; padding: 0; border: 1px solid #d9d9d9; min-width: 0; display: block; }
.fs legend { margin-left: 4px; padding: 0 2px; font-size: 12px; line-height: 16px; height: 16px; }
.fs-sel { height: 215px; }
.fs-adv { height: 84px; margin-top: 7px; }
.fs-ex { width: 215px; height: 344px; flex: none; }

.radios { display: flex; height: 16px; margin: 7px 0 0 24px; }
.radio { display: flex; align-items: center; width: 178px; line-height: 16px; }
.radio i { width: 13px; height: 13px; border: 1px solid #555; border-radius: 50%; background: #fff; margin-right: 3px; display: flex; align-items: center; justify-content: center; }
.radio.on i::after { content: ""; width: 7px; height: 7px; border-radius: 50%; background: #333; }
.listbox { margin: 4px 14px 0 21px; height: 140px; background: #fff; border: 1px solid #8a8f99; padding: 0 0 0 3px; }
.li-row { display: flex; align-items: center; height: 16px; font: 10px "Liberation Mono", monospace; gap: 3px; }
.ck { width: 13px; height: 13px; border: 1px solid #444; background: #fff; position: relative; flex: none; }
.ck::after { content: ""; position: absolute; left: 2px; top: 1px; width: 7px; height: 4px; border: solid #555; border-width: 0 0 1px 1px; transform: rotate(-45deg) translate(-1px, 1px); }
.ck.big { width: 16px; height: 16px; border-width: 1.500px; border-color: #222; margin-left: 11px; }
.ck.big::after { left: 3px; top: 2px; width: 8px; height: 5px; }
.listbar { margin: 0 14px 0 21px; height: 23px; display: flex; align-items: center; padding-left: 3px; background: linear-gradient(#f6f6f6, #f0f0f0); border-right: 1px solid #aaa; }
.lb-sep { width: 1px; height: 16px; background: #bbb; margin-left: 7px; }
.funnel { width: 24px; height: 16px; margin-left: 5px; }
.lb-sep + .lb-name { margin-left: 5px; }
.lb-input { width: 38px; height: 23px; background: #fff; margin-left: 13px; }
.adv-1 { display: flex; align-items: center; height: 20px; margin-top: 7px; padding-left: 27px; }
.spin { width: 60px; height: 20px; margin-left: 6px; background: #fff; border: 1px solid #bbb; display: flex; align-items: center; justify-content: space-between; font: 11px "Liberation Mono", monospace; padding-left: 2px; }
.spinbtn { width: 14px; height: 16px; margin-right: 1px; background: #eee; border: 1px solid #ccc; display: flex; flex-direction: column; align-items: center; justify-content: space-around; }
.spinbtn .up { width: 0; height: 0; border-style: solid; border-width: 0 3px 4px; border-color: transparent transparent #222; }
.spinbtn .down { width: 0; height: 0; border-style: solid; border-width: 4px 3px 0; border-color: #222 transparent transparent; }
.info { width: 15px; height: 15px; margin-left: 44px; }
.hint { color: #006400; margin-left: 3px; }
.adv-2 { display: flex; align-items: center; height: 22px; margin-top: 11px; padding-left: 27px; }
.adv-l { margin-left: 4px; letter-spacing: .1px; white-space: nowrap; }
.select { width: 108px; height: 22px; margin-left: 5px; background: #f4f4f4; border: 1px solid #777; display: flex; align-items: center; padding-left: 6px; }
.sel-chev { width: 9px; height: 5px; margin-left: auto; margin-right: 8px; }
.dbtns { display: flex; justify-content: space-between; align-items: flex-start; padding: 0 16px 0 24px; margin-top: 11px; }
.btn { width: 70px; height: 27px; background: #e1e1e1; border: 1px solid #adadad; display: flex; align-items: center; justify-content: center; }
.btn.up1 { margin-top: -1px; }

/* example picture */
.exbox { width: 201px; height: 318px; margin: 4px 0 0 7px; background: #fff; position: relative; padding: 13px 3px 0; font-family: "Liberation Mono", "Noto Sans CJK SC", monospace; }
.xltabs { height: 17px; width: 195px; display: flex; align-items: flex-end; background: linear-gradient(#e3ecf8, #bcd0ea); border-bottom: 2px solid #6f94c6; color: #2a4a7c; font-size: 14px; line-height: 19px; white-space: nowrap; overflow: hidden; }
.xlnav { width: 60px; height: 15px; display: block; flex: none; }
.xlnav svg { width: 58px; height: 15px; display: block; }
.xltab { width: 52px; height: 15px; text-align: center; flex: none; background: #dfe8f5; clip-path: polygon(0 0, 84% 0, 100% 100%, 0 100%); }
.xltab.on { background: #fff; }
.xlnew { width: 24px; height: 14px; margin-left: 1px; }
.exarrow { display: block; width: 16px; height: 24px; margin: 7px 0 0 91px; }
.xl {
  position: relative;
  width: 195px;
  margin: 3px 0 0 -1px;
  display: grid;
  grid-template-columns: 33px 53px 62px 47px;
  grid-template-rows: 17px repeat(13, 18px);
  font-size: 14px;
  line-height: 17px;
  color: #111;
  white-space: nowrap;
}
.xh { background: linear-gradient(#e9eff8, #ced9ea); border-top: 1px solid #86a6d0; border-right: 1px solid #a9bcd8; color: #333; text-align: center; font-size: 13px; line-height: 16px; }
.xc0 { background: #a9c5e8; }
.xr { background: #e4ecf7; border-right: 1px solid #9db8dc; border-bottom: 1px solid #c9d6e8; color: #44546a; text-align: center; font-size: 13px; line-height: 18px; padding-top: 2px; }
.xa { border-right: 1px solid #d8d8d8; border-bottom: 1px solid #d8d8d8; padding: 1px 0 0 3px; font-size: 13px; }
.xb { border-left: 1px solid #000; border-bottom: 1px solid #000; padding: 1px 0 0 3px; margin-left: -1px; letter-spacing: .4px; }
.xb.nob { border-bottom: none; }
.xb.head { background: #c5d9f1; border-top: 1px solid #000; }
.xb.span2 { grid-column: span 2; letter-spacing: -.3px; }
.box { position: absolute; left: 33px; width: 54px; border: 3px solid #f58b3c; }
.box.b1 { top: 52px; height: 93px; }
.box.b2 { top: 143px; height: 92px; }

/* overlays */
.annot { position: absolute; left: 0; top: 0; width: 1920px; height: 1000px; pointer-events: none; filter: drop-shadow(3px 3px 3px rgba(0,0,0,.45)); }
.watermark { position: absolute; left: 1760px; top: 950px; width: 160px; height: 50px; display: flex; pointer-events: none; }
.wm-logo { width: 46px; height: 42px; flex: none; }
.wm-text { display: flex; flex-direction: column; margin-left: -1px; }
.wm-cn { font: bold 21px/24px "Noto Sans CJK SC", sans-serif; color: #3a86c8; opacity: .85; white-space: nowrap; }
.wm-en { font: 18px/22px "Noto Sans", sans-serif; color: #45b36a; opacity: .85; white-space: nowrap; margin-top: 1px; }
```
